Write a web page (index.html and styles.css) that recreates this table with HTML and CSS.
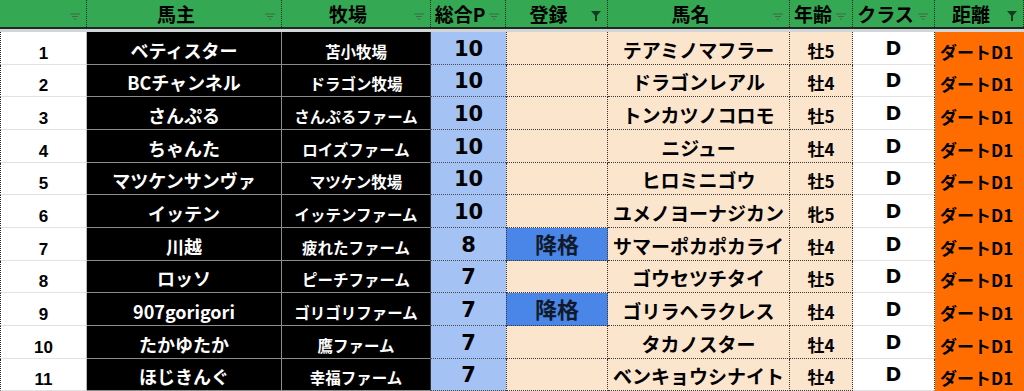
FILE: index.html
```html
<!DOCTYPE html>
<html lang="ja">
<head>
<meta charset="utf-8">
<link rel="stylesheet" href="styles.css">
</head>
<body>
<div class="sheet">
  <div class="head">
    <div class="hc"><span class="ht"></span><svg class="fi" viewBox="0 0 10 7"><path d="M0 1h10M2 3.5h6M4 6h2"/></svg></div>
    <div class="hc"><span class="ht">馬主</span><svg class="fi" viewBox="0 0 10 7"><path d="M0 1h10M2 3.5h6M4 6h2"/></svg></div>
    <div class="hc"><span class="ht">牧場</span><svg class="fi" viewBox="0 0 10 7"><path d="M0 1h10M2 3.5h6M4 6h2"/></svg></div>
    <div class="hc"><span class="ht">総合P</span><svg class="fi" viewBox="0 0 10 7"><path d="M0 1h10M2 3.5h6M4 6h2"/></svg></div>
    <div class="hc"><span class="ht">登録</span><svg class="fa" viewBox="0 0 10 10"><path d="M0 0h10L6 4.5V10H4V4.5z"/></svg></div>
    <div class="hc"><span class="ht">馬名</span><svg class="fi" viewBox="0 0 10 7"><path d="M0 1h10M2 3.5h6M4 6h2"/></svg></div>
    <div class="hc"><span class="ht">年齢</span><svg class="fi" viewBox="0 0 10 7"><path d="M0 1h10M2 3.5h6M4 6h2"/></svg></div>
    <div class="hc"><span class="ht">クラス</span><svg class="fi" viewBox="0 0 10 7"><path d="M0 1h10M2 3.5h6M4 6h2"/></svg></div>
    <div class="hc"><span class="ht">距離</span><svg class="fa" viewBox="0 0 10 10"><path d="M0 0h10L6 4.5V10H4V4.5z"/></svg></div>
  </div>
  <div class="band"></div>
  <div class="rows">
    <div class="row"><div class="c no">1</div><div class="c owner">ベティスター</div><div class="c farm">苫小牧場</div><div class="c pts">10</div><div class="c reg"></div><div class="c name">テアミノマフラー</div><div class="c age">牡5</div><div class="c cls">D</div><div class="c dist">ダートD1</div></div>
    <div class="row"><div class="c no">2</div><div class="c owner">BCチャンネル</div><div class="c farm">ドラゴン牧場</div><div class="c pts">10</div><div class="c reg"></div><div class="c name">ドラゴンレアル</div><div class="c age">牡4</div><div class="c cls">D</div><div class="c dist">ダートD1</div></div>
    <div class="row"><div class="c no">3</div><div class="c owner">さんぷる</div><div class="c farm">さんぷるファーム</div><div class="c pts">10</div><div class="c reg"></div><div class="c name">トンカツノコロモ</div><div class="c age">牡5</div><div class="c cls">D</div><div class="c dist">ダートD1</div></div>
    <div class="row"><div class="c no">4</div><div class="c owner">ちゃんた</div><div class="c farm">ロイズファーム</div><div class="c pts">10</div><div class="c reg"></div><div class="c name">ニジュー</div><div class="c age">牡4</div><div class="c cls">D</div><div class="c dist">ダートD1</div></div>
    <div class="row"><div class="c no">5</div><div class="c owner">マツケンサンヴァ</div><div class="c farm">マツケン牧場</div><div class="c pts">10</div><div class="c reg"></div><div class="c name">ヒロミニゴウ</div><div class="c age">牡5</div><div class="c cls">D</div><div class="c dist">ダートD1</div></div>
    <div class="row"><div class="c no">6</div><div class="c owner">イッテン</div><div class="c farm">イッテンファーム</div><div class="c pts">10</div><div class="c reg"></div><div class="c name">ユメノヨーナジカン</div><div class="c age">牝5</div><div class="c cls">D</div><div class="c dist">ダートD1</div></div>
    <div class="row"><div class="c no">7</div><div class="c owner">川越</div><div class="c farm">疲れたファーム</div><div class="c pts">8</div><div class="c reg demote">降格</div><div class="c name">サマーポカポカライ</div><div class="c age">牡4</div><div class="c cls">D</div><div class="c dist">ダートD1</div></div>
    <div class="row"><div class="c no">8</div><div class="c owner">ロッソ</div><div class="c farm">ピーチファーム</div><div class="c pts">7</div><div class="c reg"></div><div class="c name">ゴウセツチタイ</div><div class="c age">牡5</div><div class="c cls">D</div><div class="c dist">ダートD1</div></div>
    <div class="row"><div class="c no">9</div><div class="c owner">907gorigori</div><div class="c farm">ゴリゴリファーム</div><div class="c pts">7</div><div class="c reg demote">降格</div><div class="c name">ゴリラヘラクレス</div><div class="c age">牡4</div><div class="c cls">D</div><div class="c dist">ダートD1</div></div>
    <div class="row"><div class="c no">10</div><div class="c owner">たかゆたか</div><div class="c farm">鷹ファーム</div><div class="c pts">7</div><div class="c reg"></div><div class="c name">タカノスター</div><div class="c age">牡4</div><div class="c cls">D</div><div class="c dist">ダートD1</div></div>
    <div class="row"><div class="c no">11</div><div class="c owner">ほじきんぐ</div><div class="c farm">幸福ファーム</div><div class="c pts">7</div><div class="c reg"></div><div class="c name">ベンキョウシナイト</div><div class="c age">牡4</div><div class="c cls">D</div><div class="c dist">ダートD1</div></div>
  </div>
</div>
</body>
</html>
```
FILE: styles.css
```css
* { box-sizing: border-box; }
html, body { margin: 0; padding: 0; background: #fff; }
body {
  font-family: "Noto Sans CJK JP", "Noto Sans", sans-serif;
  font-weight: 700;
  color: #000;
  width: 1024px;
  height: 391px;
  overflow: hidden;
}
.sheet { width: 1024px; }
.head, .row {
  display: grid;
  grid-template-columns: 87px 195px 149px 75px 102px 182px 63px 82px 89px;
  grid-template-rows: minmax(0, 1fr);
}
.head {
  height: 29px;
  background: #34a853;
  border-bottom: 2px solid #1f2a22;
}
.hc {
  display: flex;
  align-items: center;
  border-right: 1px dotted #1a2a1e;
  padding-right: 6px;
  min-height: 0;
}
.ht {
  flex: 1;
  text-align: center;
  font-size: 19px;
  line-height: 1;
  color: #000;
}
.fi {
  width: 10px;
  height: 7px;
  margin: 6px 0 0 0;
  stroke: #3f6b4b;
  stroke-width: 1.2;
  fill: none;
}
.fa {
  width: 10px;
  height: 10px;
  margin: 4px 0 0 0;
  fill: #163a20;
}
.band { height: 3px; background: #d2d5d8; }
.row { height: 33px; }
.row:nth-child(3n+2) { height: 32px; }
.c {
  display: flex;
  align-items: flex-end;
  justify-content: center;
  line-height: 1;
  white-space: nowrap;
  min-height: 0;
  padding-bottom: 5px;
}
.no {
  background: #fff;
  font-family: "Liberation Sans", "Noto Sans CJK JP", sans-serif;
  font-size: 17px;
  padding-bottom: 2px;
  border-left: 1px dotted #222;
  border-right: 1px solid #b8b8b8;
  border-bottom: 1px solid #e2e2e2;
}
.owner {
  background: #000;
  color: #fff;
  font-size: 18px;
  border-right: 1px solid #8c8c8c;
  border-bottom: 1px solid #8c8c8c;
}
.farm {
  background: #000;
  color: #fff;
  font-size: 15.5px;
  border-right: 1px solid #333;
  border-bottom: 1px solid #8c8c8c;
}
.pts {
  background: #a4c2f4;
  font-family: "DejaVu Sans", "Noto Sans CJK JP", sans-serif;
  font-size: 21px;
  padding-bottom: 4px;
  border-bottom: 1px dotted #4a4a4a;
}
.reg {
  background: #fce5cd;
  font-size: 22px;
  padding-bottom: 6px;
  border-left: 1px dotted #3a3a3a;
  border-right: 1px dotted #3a3a3a;
  border-bottom: 1px dotted #3a3a3a;
}
.reg.demote { background: #4a86e8; color: #111a2a; }
.name {
  background: #fce5cd;
  font-size: 19px;
  border-right: 1px dotted #3a3a3a;
  border-bottom: 1px dotted #3a3a3a;
}
.age {
  background: #fce5cd;
  font-size: 17px;
  border-right: 1px dotted #3a3a3a;
  border-bottom: 1px dotted #3a3a3a;
}
.cls {
  background: #fff;
  font-family: "DejaVu Sans", "Noto Sans CJK JP", sans-serif;
  font-size: 19px;
  padding-bottom: 6px;
  border-right: 1px dotted #3a3a3a;
  border-bottom: 1px solid #e2e2e2;
}
.dist {
  background: #ff6d01;
  font-size: 17px;
  justify-content: flex-start;
  padding-left: 5px;
}
```
